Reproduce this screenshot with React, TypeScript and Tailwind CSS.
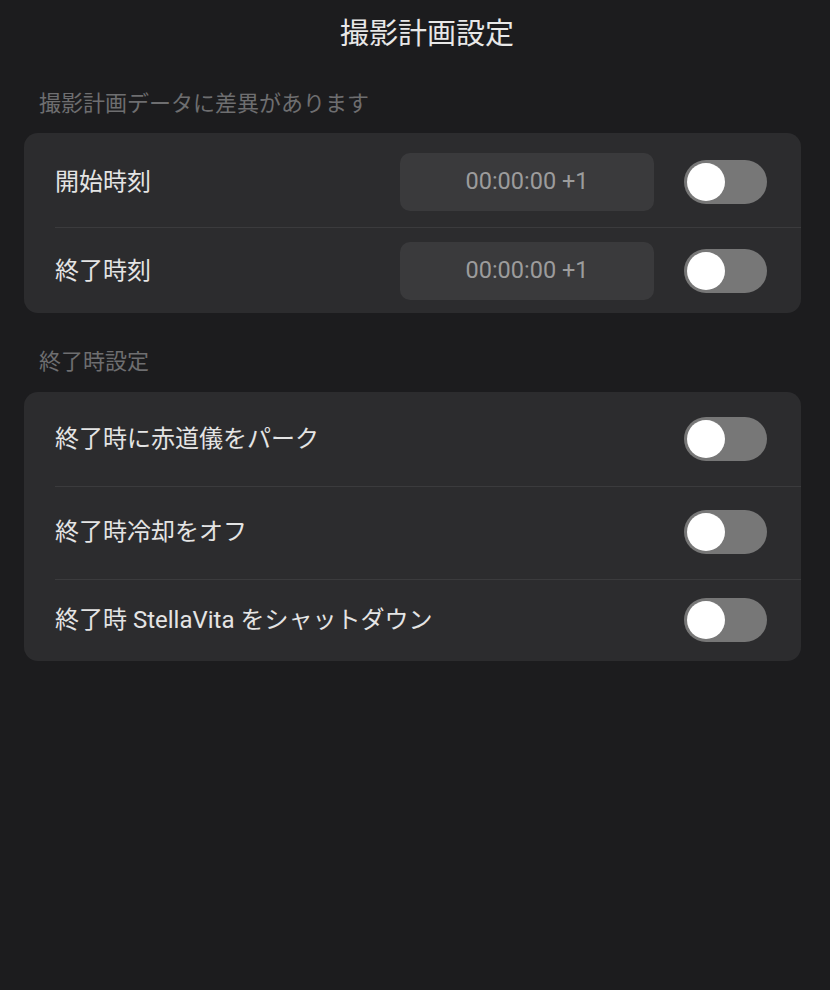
import React from "react";

const FONT = { fontFamily: 'Roboto, "Noto Sans CJK JP", sans-serif' };

function Toggle() {
  return (
    <div className="flex h-[44px] w-[83px] shrink-0 items-center rounded-full bg-[#777777] px-[3px]">
      <div className="h-[38px] w-[38px] rounded-full bg-white" />
    </div>
  );
}

function TimeBox() {
  return (
    <div className="flex h-[58px] w-[254px] items-center justify-center rounded-[10px] bg-[#3a3a3c] text-[23.5px] text-[#9c9c9c]">
      00:00:00 +1
    </div>
  );
}

function Row({ label, time, h, pt, divider }: { label: string; time?: boolean; h: string; pt: string; divider?: boolean }) {
  return (
    <div className={`${divider ? "border-b border-[#3b3b3d]" : ""} ml-[31px]`}>
      <div className={`flex items-center pr-[34px] ${h} ${pt}`}>
        <span className="flex-1 text-[24px] text-[#e4e4e4]">{label}</span>
        {time && <div className="mr-[30px]"><TimeBox /></div>}
        <Toggle />
      </div>
    </div>
  );
}

export default function App() {
  return (
    <div style={FONT} className="min-h-[990px] w-full bg-[#1c1c1e] pl-[24px] pr-[29px]">
      <h1 className="pl-[29px] pt-[14px] text-center text-[29px] leading-[40px] text-[#e8e8e8]">撮影計画設定</h1>

      <div className="mt-[35px] pl-[15px] text-[22px] leading-[30px] text-[#6e6e70]">撮影計画データに差異があります</div>
      <div className="mt-[14px] rounded-[14px] bg-[#2c2c2e]">
        <Row label="開始時刻" time h="h-[94px]" pt="pt-[4px]" divider />
        <Row label="終了時刻" time h="h-[85px]" pt="pb-[0px]" />
      </div>

      <div className="mt-[34px] pl-[15px] text-[22px] leading-[30px] text-[#6e6e70]">終了時設定</div>
      <div className="mt-[15px] rounded-[14px] bg-[#2c2c2e]">
        <Row label="終了時に赤道儀をパーク" h="h-[94px]" pt="pt-[0px]" divider />
        <Row label="終了時冷却をオフ" h="h-[92px]" pt="pb-[2px]" divider />
        <Row label="終了時 StellaVita をシャットダウン" h="h-[81px]" pt="pb-[2px]" />
      </div>
    </div>
  );
}
